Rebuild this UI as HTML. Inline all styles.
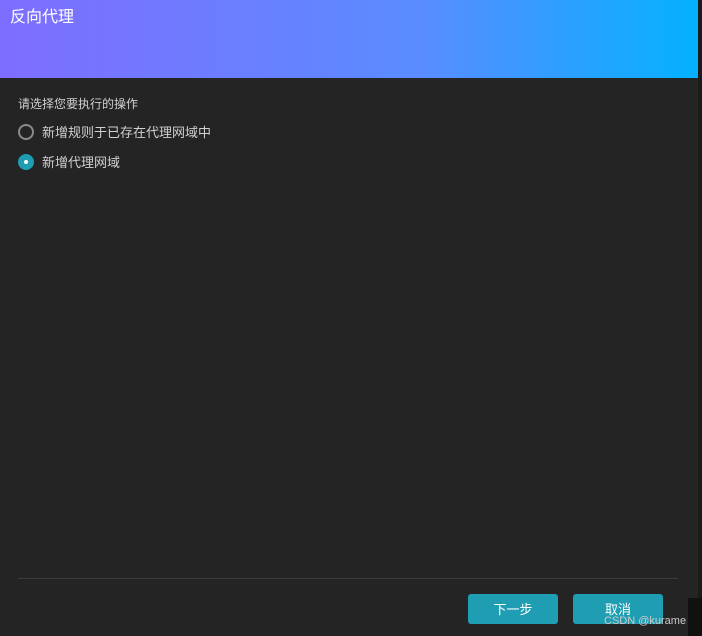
<!DOCTYPE html><html><head><meta charset="utf-8"><style>
body{margin:0;width:702px;height:636px;background:#242424;position:relative;overflow:hidden;font-family:"Liberation Sans","Noto Sans CJK SC",sans-serif}
.hdr{position:absolute;left:0;top:0;width:698px;height:78px;background:linear-gradient(90deg,#7f6dff,#5a8cff 60%,#04b1ff)}
.hdr span{position:absolute;left:10px;top:8px;color:#fff;font-size:16px;line-height:20px}
.edge{position:absolute;left:698px;top:0;width:4px;height:636px;background:#1b1b1b}
.blk{position:absolute;left:688px;top:598px;width:14px;height:38px;background:#111}
.t{position:absolute;color:#d0d0d0;font-size:12px;line-height:16px}
.r{position:absolute;left:18px;width:16px;height:16px;border-radius:50%;box-sizing:border-box}
.line{position:absolute;left:18px;top:578px;width:660px;height:1px;background:#3a3a3a}
.btn{position:absolute;top:594px;width:90px;height:30px;border-radius:3px;background:#1f9db3;color:#fff;font-size:13px;text-align:center;line-height:31px}
</style></head><body>
<div class="hdr"><span>反向代理</span></div>
<div class="edge"></div>
<div class="t" style="left:18px;top:96px">请选择您要执行的操作</div>
<div class="r" style="top:124px;border:2px solid #8a8a8a"></div>
<div class="t" style="left:42px;top:125px;font-size:13px">新增规则于已存在代理网域中</div>
<div class="r" style="top:154px;background:#1f9db3"><div style="position:absolute;left:6px;top:6px;width:4px;height:4px;border-radius:50%;background:#fff"></div></div>
<div class="t" style="left:42px;top:155px;font-size:13px">新增代理网域</div>
<div class="line"></div>
<div class="btn" style="left:468px">下一步</div>
<div class="btn" style="left:573px">取消</div>
<div class="blk"></div>
<div style="position:absolute;left:604px;top:615px;color:#ccc;font-size:11px">CSDN @kurame</div>
</body></html>
